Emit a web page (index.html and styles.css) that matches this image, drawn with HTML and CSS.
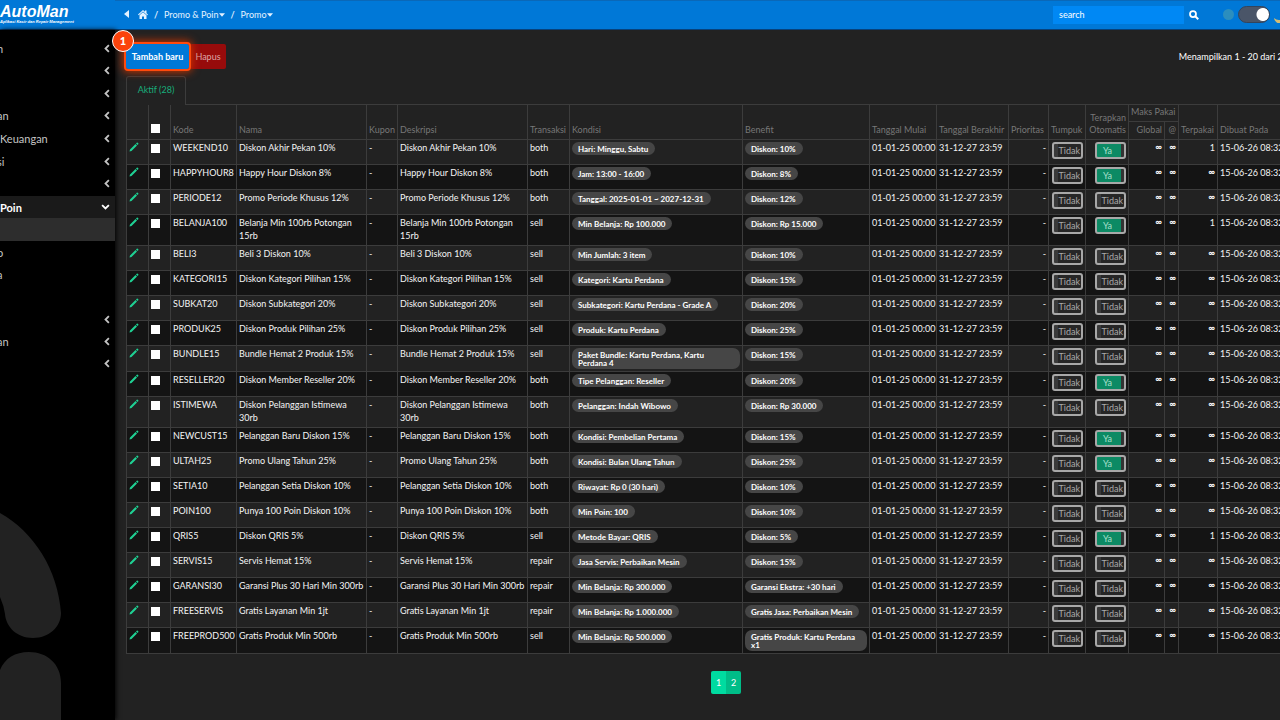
FILE: index.html
```html
<!DOCTYPE html>
<html lang="id">
<head>
<meta charset="utf-8">
<title>AutoMan - Promo</title>
<link rel="stylesheet" href="styles.css">
</head>
<body>
<svg class="sprite" aria-hidden="true">
  <symbol id="left" viewBox="0 0 8 12"><path d="M6.5 1.5 2 6l4.500 4.500" fill="none" stroke="currentColor" stroke-width="2.400"/></symbol>
  <symbol id="down" viewBox="0 0 12 8"><path d="M1.500 1.500 6 6l4.500-4.500" fill="none" stroke="currentColor" stroke-width="2.400"/></symbol>
  <symbol id="caret" viewBox="0 0 10 6"><path d="M0 0h10L5 6z" fill="currentColor"/></symbol>
  <symbol id="pencil" viewBox="0 0 20 20"><path d="M1 19l1-4L13 4l3 3L5 18zM14 3l1.500-1.500q1-.8 2 0l1 1q.8 1 0 2L17 6z" fill="currentColor"/></symbol>
</svg>
<header class="topbar">
  <a class="brand" href="#"><span class="brand-name">AutoMan</span><span class="brand-sub">Aplikasi Kasir dan Repair Management</span></a>
  <div class="bar">
    <nav class="crumbs" aria-label="Breadcrumb">
      <a href="#" aria-label="Kembali"><svg width="5" height="8" viewBox="0 0 5 8"><path d="M5 0v8L0 4z" fill="currentColor"/></svg></a>
      <a href="#" aria-label="Beranda"><svg class="home" width="10" height="9" viewBox="0 0 20 18"><path d="M10 0 0 9l1.500 1.500L10 3l8.500 7.500L20 9l-3-2.700V1h-3v2.600zM10 4.500 3 10.700V18h5v-5h4v5h5v-7.300z" fill="currentColor"/></svg></a>
      <span class="slash">/</span>
      <a class="crumb" href="#">Promo &amp; Poin<svg width="6" height="4"><use href="#caret"/></svg></a>
      <span class="slash">/</span>
      <a class="crumb" href="#">Promo<svg width="6" height="4"><use href="#caret"/></svg></a>
    </nav>
    <form class="tools">
      <input class="search" type="text" placeholder="search" aria-label="search">
      <button class="find" type="button" aria-label="Cari"><svg width="10" height="10" viewBox="0 0 20 20"><circle cx="8" cy="8" r="6" fill="none" stroke="currentColor" stroke-width="3.500"/><path d="m12.500 12.500 6 6" stroke="currentColor" stroke-width="4"/></svg></button>
      <span class="sun"></span>
      <input class="theme" type="checkbox" role="switch" checked aria-label="Mode gelap">
      <svg class="moon" width="12" height="12" viewBox="0 0 12 12"><path d="M0 7a6 6 0 0 0 12-1 5 5 0 0 1-6 3A7 7 0 0 1 0 7z" fill="#d5bd73"/></svg>
    </form>
  </div>
</header>
<div class="shell">
  <aside class="side">
    <ul class="menu first">
      <li><a href="#"><span class="cut">n</span><svg width="6" height="9"><use href="#left"/></svg></a></li>
      <li><a href="#" aria-label="Menu"><svg width="6" height="9"><use href="#left"/></svg></a></li>
      <li><a href="#" aria-label="Menu"><svg width="6" height="9"><use href="#left"/></svg></a></li>
      <li><a href="#"><span class="cut">an</span><svg width="6" height="9"><use href="#left"/></svg></a></li>
      <li><a href="#"><span>Keuangan</span><svg width="6" height="9"><use href="#left"/></svg></a></li>
      <li><a href="#"><span class="cut">si</span><svg width="6" height="9"><use href="#left"/></svg></a></li>
      <li><a href="#" aria-label="Menu"><svg width="6" height="9"><use href="#left"/></svg></a></li>
    </ul>
    <a class="open" href="#"><span>Poin</span><svg width="9" height="6"><use href="#down"/></svg></a>
    <a class="current" href="#" aria-label="Promo"></a>
    <ul class="menu second">
      <li><a href="#"><span class="cut">o</span></a></li>
      <li><a href="#"><span class="cut">a</span></a></li>
      <li></li>
      <li><a href="#" aria-label="Menu"><svg width="6" height="9"><use href="#left"/></svg></a></li>
      <li><a href="#"><span class="cut">an</span><svg width="6" height="9"><use href="#left"/></svg></a></li>
      <li><a href="#" aria-label="Menu"><svg width="6" height="9"><use href="#left"/></svg></a></li>
    </ul>
    <svg class="mark" width="115" height="210" viewBox="0 0 115 210"><path d="M0 3C34 22 58 60 61 103C61 117 49 128 33 128C17 128 6 117 5 104Q4 96 0 87zM0 160C5 148 15 142 29 142C47 142 61 154 61 173V210H0z" fill="#222"/></svg>
  </aside>
  <main class="main">
    <div class="actions">
      <div class="guide">
        <button class="btn add" type="button">Tambah baru</button>
        <span class="step">1</span>
      </div>
      <button class="btn del" type="button">Hapus</button>
      <p class="count">Menampilkan 1 - 20 dari 28</p>
    </div>
    <div class="tabs"><a class="tab" href="#">Aktif (28)</a><span class="rule"></span></div>
    <table class="promos">
      <colgroup><col class="w22"><col class="w22"><col class="w66"><col class="w130"><col class="w31"><col class="w130"><col class="w42"><col class="w173"><col class="w127"><col class="w67"><col class="w72"><col class="w40"><col class="w37"><col class="w43"><col class="w36"><col class="w14"><col class="w39"><col></colgroup>
      <thead>
        <tr>
          <th rowspan="2"></th><th rowspan="2"><input class="tick" type="checkbox" aria-label="Pilih semua"></th><th rowspan="2">Kode</th><th rowspan="2">Nama</th><th rowspan="2">Kupon</th><th rowspan="2">Deskripsi</th><th rowspan="2">Transaksi</th><th rowspan="2">Kondisi</th><th rowspan="2">Benefit</th><th rowspan="2">Tanggal Mulai</th><th rowspan="2">Tanggal Berakhir</th><th rowspan="2">Prioritas</th><th rowspan="2">Tumpuk</th><th rowspan="2" class="num">Terapkan<br>Otomatis</th><th colspan="2">Maks Pakai</th><th rowspan="2">Terpakai</th><th rowspan="2">Dibuat Pada</th>
        </tr>
        <tr class="sub"><th class="num">Global</th><th class="num">@</th></tr>
      </thead>
      <tbody id="rows"></tbody>
    </table>
    <nav class="pager" aria-label="Halaman"><a class="on" href="#">1</a><a href="#">2</a></nav>
  </main>
</div>
<script src="app.js"></script>
</body>
</html>
```

FILE: styles.css
```css
* { box-sizing: border-box; }
body {
  margin: 0;
  min-height: 100vh;
  display: flex;
  flex-direction: column;
  overflow: hidden;
  background: #222;
  color: #f4f4f4;
  font: 9px/13px Lato, sans-serif;
}
a { color: inherit; text-decoration: none; }
button, input { font: inherit; color: inherit; margin: 0; }
ul { list-style: none; margin: 0; padding: 0; }
.sprite { position: absolute; width: 0; height: 0; }

.topbar { display: flex; height: 30px; background: #0078d7; border-bottom: 1px solid #07427c; }
.brand { width: 115px; padding-top: 4px; color: #fff; display: flex; flex-direction: column; }
.brand-name { font: italic 700 16px/16px "Liberation Sans", sans-serif; }
.brand-sub { font: italic 700 4px/4px "Liberation Sans", sans-serif; white-space: nowrap; }
.bar { flex: 1; display: flex; justify-content: space-between; align-items: center; border-top: 1px solid #0a68b8; }
.crumbs { display: flex; align-items: center; gap: 6px; padding: 0 0 2px 9px; color: #e4f2ff; }
.crumbs a { display: flex; align-items: center; }
.home { margin-left: 3px; }
.slash { width: 4px; font-weight: 700; }
.crumb svg { margin-top: 2px; }
.tools { display: flex; align-items: center; padding: 0 2px 1px 0; }
.search { width: 131px; height: 18px; border: 0; padding: 0 6px; background: #0088f4; color: #fff; }
.search::placeholder { color: #fff; opacity: 1; }
.find { border: 0; background: none; padding: 0 5px; color: #fff; display: flex; }
.sun { width: 11px; height: 11px; margin: 0 4px 0 19px; border-radius: 50%; background: #2b8ebe; }
.theme { appearance: none; width: 32px; height: 17px; border-radius: 9px; border: 1px solid #33445c; background: radial-gradient(circle at 24px 50%, #fff 6px, transparent 7px) #4a5568; }
.moon { margin: 5px -8px 0 4px; }

.shell { flex: 1; display: flex; }
.side { width: 115px; padding-top: 7px; display: flex; flex-direction: column; background: #000; box-shadow: 1px 0 5px #000; font-size: 11px; color: #c4c4c4; overflow: hidden; }
.menu { display: grid; grid-auto-rows: 1fr; }
.first { height: 158px; margin-bottom: 1px; }
.second { height: 134px; }
.menu a, .open { height: 100%; display: flex; align-items: center; padding-right: 5px; }
.menu svg, .open svg { margin-left: auto; }
.cut { margin-left: -3px; }
.side .open { height: 22px; background: #1a1a1a; color: #fff; font-weight: 700; }
.current { height: 23px; background: #2d2d2d; }
.mark { margin-top: auto; }

.main { flex: 1; min-width: 0; margin-right: -46px; padding: 14px 0 20px 11px; }
.actions { display: flex; align-items: center; height: 25px; }
.btn { height: 25px; border: 0; border-radius: 2px; padding: 0 0 1px; white-space: nowrap; }
.guide { position: relative; margin-right: 1px; }
.add { width: 63px; background: #0078d7; color: #fff; font-weight: 700; outline: 2px solid #ff4a0d; box-shadow: 0 0 8px 3px #c83400; }
.step { position: absolute; left: -14px; top: -14px; width: 22px; height: 22px; border: 1px solid #fff; border-radius: 50%; background: #fb430c; color: #fff; font: 900 11px/20px Lato, sans-serif; text-align: center; }
.del { width: 36px; background: #970b0b; color: #dda5a5; }
.count { margin: 0 38px 0 auto; color: #fff; }
.tabs { display: flex; margin-top: 7px; height: 29px; }
.tab { width: 60px; border: 1px solid #3c3c3c; border-bottom: 0; border-radius: 3px 3px 0 0; color: #17ae7b; text-align: center; line-height: 26px; }
.rule { flex: 1; border-bottom: 1px solid #3c3c3c; }

.promos { width: 100%; table-layout: fixed; border-collapse: separate; border-spacing: 0; border-left: 1px solid #3c3c3c; }
.w14 { width: 14px; } .w22 { width: 22px; } .w31 { width: 31px; } .w36 { width: 36px; }
.w37 { width: 37px; } .w39 { width: 39px; } .w40 { width: 40px; } .w42 { width: 42px; }
.w43 { width: 43px; } .w66 { width: 66px; } .w67 { width: 67px; } .w72 { width: 72px; }
.w127 { width: 127px; } .w130 { width: 130px; } .w173 { width: 173px; }
.promos th, .promos td { border: 0 solid #3c3c3c; border-width: 0 1px 1px 0; padding: 1px 2px 0 2px; text-align: left; }
.promos th { height: 17px; padding: 0 2px 3px 2px; color: #777; font-weight: 400; vertical-align: bottom; line-height: 12px; white-space: nowrap; }
.promos .sub th { height: 18px; }
.promos td { height: 25px; vertical-align: top; }
.promos .long td { height: 31px; }
.promos .tall td { height: 26px; }
.promos tbody tr:nth-child(even) { background: #141414; }
.promos .num { text-align: right; }
.promos .inf { font-weight: 900; line-height: 12px; }
.promos .nw { white-space: nowrap; }
.tick { appearance: none; display: block; width: 9px; height: 9px; margin: 3px 0 0; background: #fff; }
th .tick { margin: 0 0 3px; }
.edit { display: block; width: 10px; height: 10px; margin-top: 1px; border: 0; padding: 0; background: none; color: #1fd093; }
.edit svg { display: block; }
.pill { display: inline-block; vertical-align: top; margin-top: 1px; padding: 3px 7px 2px 6px; border-radius: 7px; background: #464646; color: #fff; font-weight: 700; font-size: 8px; line-height: 8px; }
.flag { display: block; width: 31px; height: 17px; margin: 1px 0 0 auto; padding: 0 1px 0 0; border: 2px solid #a8a8a8; border-radius: 3px; background: linear-gradient(90deg, #3a3a3a 4px, #262626 4px); color: #aaa; line-height: 13px; text-align: right; }
.flag.yes { padding: 0 0 0 6px; background: linear-gradient(90deg, #0c8a64 24px, #333 24px); color: #a9e0cd; text-align: left; }
.pager { display: flex; justify-content: center; margin-top: 17px; color: #fff; text-align: center; line-height: 23px; }
.pager a { width: 15px; background: #00bd88; border-radius: 0 2px 2px 0; }
.pager .on { background: #00dba0; border-radius: 2px 0 0 2px; }
```

FILE: app.js
```js
// code, name, transaction, condition, benefit, auto-apply, times used
const promos = [
  ["WEEKEND10", "Diskon Akhir Pekan 10%", "both", "Hari: Minggu, Sabtu", "Diskon: 10%", 1, "1"],
  ["HAPPYHOUR8", "Happy Hour Diskon 8%", "both", "Jam: 13:00 - 16:00", "Diskon: 8%", 1, "∞"],
  ["PERIODE12", "Promo Periode Khusus 12%", "both", "Tanggal: 2025-01-01 ~ 2027-12-31", "Diskon: 12%", 0, "∞"],
  ["BELANJA100", "Belanja Min 100rb Potongan 15rb", "sell", "Min Belanja: Rp 100.000", "Diskon: Rp 15.000", 1, "1", "long"],
  ["BELI3", "Beli 3 Diskon 10%", "sell", "Min Jumlah: 3 item", "Diskon: 10%", 0, "∞"],
  ["KATEGORI15", "Diskon Kategori Pilihan 15%", "sell", "Kategori: Kartu Perdana", "Diskon: 15%", 0, "∞"],
  ["SUBKAT20", "Diskon Subkategori 20%", "sell", "Subkategori: Kartu Perdana - Grade A", "Diskon: 20%", 0, "∞"],
  ["PRODUK25", "Diskon Produk Pilihan 25%", "sell", "Produk: Kartu Perdana", "Diskon: 25%", 0, "∞"],
  ["BUNDLE15", "Bundle Hemat 2 Produk 15%", "sell", "Paket Bundle: Kartu Perdana, Kartu Perdana&nbsp;4", "Diskon: 15%", 0, "∞", "tall"],
  ["RESELLER20", "Diskon Member Reseller 20%", "both", "Tipe Pelanggan: Reseller", "Diskon: 20%", 1, "∞"],
  ["ISTIMEWA", "Diskon Pelanggan Istimewa 30rb", "both", "Pelanggan: Indah Wibowo", "Diskon: Rp 30.000", 0, "∞", "long"],
  ["NEWCUST15", "Pelanggan Baru Diskon 15%", "both", "Kondisi: Pembelian Pertama", "Diskon: 15%", 1, "∞"],
  ["ULTAH25", "Promo Ulang Tahun 25%", "both", "Kondisi: Bulan Ulang Tahun", "Diskon: 25%", 1, "∞"],
  ["SETIA10", "Pelanggan Setia Diskon 10%", "both", "Riwayat: Rp 0 (30 hari)", "Diskon: 10%", 0, "∞"],
  ["POIN100", "Punya 100 Poin Diskon 10%", "both", "Min Poin: 100", "Diskon: 10%", 0, "∞"],
  ["QRIS5", "Diskon QRIS 5%", "sell", "Metode Bayar: QRIS", "Diskon: 5%", 1, "1"],
  ["SERVIS15", "Servis Hemat 15%", "repair", "Jasa Servis: Perbaikan Mesin", "Diskon: 15%", 0, "∞"],
  ["GARANSI30", "Garansi Plus 30 Hari Min 300rb", "repair", "Min Belanja: Rp 300.000", "Garansi Ekstra: +30 hari", 0, "∞"],
  ["FREESERVIS", "Gratis Layanan Min 1jt", "repair", "Min Belanja: Rp 1.000.000", "Gratis Jasa: Perbaikan Mesin", 0, "∞"],
  ["FREEPROD500", "Gratis Produk Min 500rb", "sell", "Min Belanja: Rp 500.000", "Gratis Produk: Kartu Perdana x1", 0, "∞", "tall"]
];
const flag = on => `<button type="button" role="switch" aria-checked="${!!on}" class="flag${on ? " yes" : ""}">${on ? "Ya" : "Tidak"}</button>`;
document.getElementById("rows").innerHTML = promos.map(([code, name, trx, cond, benefit, auto, used, size = ""]) => `
<tr class="${size}">
<td><button class="edit" type="button" aria-label="Ubah ${code}"><svg width="10" height="10"><use href="#pencil"/></svg></button></td>
<td><input class="tick" type="checkbox" aria-label="Pilih ${code}"></td>
<td class="nw">${code}</td><td>${name}</td><td>-</td><td>${name}</td><td>${trx}</td>
<td><span class="pill">${cond}</span></td><td><span class="pill">${benefit}</span></td>
<td class="nw">01-01-25 00:00</td><td class="nw">31-12-27 23:59</td><td class="num">-</td>
<td>${flag(0)}</td><td>${flag(auto)}</td>
<td class="num inf">∞</td><td class="num inf">∞</td><td class="num${used === "∞" ? " inf" : ""}">${used}</td><td class="nw">15-06-26 08:32</td>
</tr>`).join("");
```
